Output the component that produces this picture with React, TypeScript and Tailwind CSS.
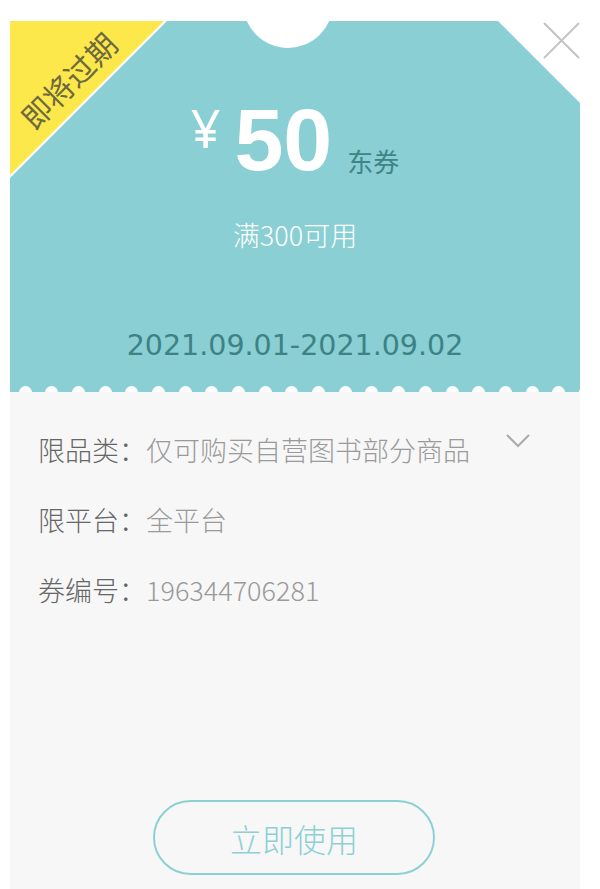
const cjk = "font-['Noto_Sans_CJK_SC','Noto_Sans',sans-serif]";

const rows = [
    { label: "限品类：", value: "仅可购买自营图书部分商品", more: true },
    { label: "限平台：", value: "全平台" },
    { label: "券编号：", value: "196344706281" },
];

const App = () => {
    return (
        <div className="min-h-[889px] bg-white pt-[21px] pl-[10px]">
            <div className="relative w-[570px]">
                {/* top part */}
                <div className="relative h-[371px] bg-[#89cfd3] [clip-path:polygon(0_0,488px_0,570px_82px,570px_100%,0_100%)]">
                    <div className="absolute left-[233px] top-[-63px] w-[90px] h-[90px] rounded-full bg-white" />
                    <div className="absolute left-0 top-0 w-[157px] h-[157px] bg-white [clip-path:polygon(0_0,100%_0,0_100%)]" />
                    <div className="absolute left-0 top-0 w-[154px] h-[154px] bg-[#fde84c] [clip-path:polygon(0_0,100%_0,0_100%)]" />
                    <div
                        className={`absolute left-[-14px] top-[44px] w-[144px] text-center text-[30px] leading-[30px] text-[#6d6a3f] -rotate-45 ${cjk}`}
                    >
                        即将过期
                    </div>

                    <div className="flex flex-col items-center pt-[75px]">
                        <div className="flex h-[88px] items-start">
                            <span className="mt-[6px] mr-[14px] text-[52px] leading-none text-white font-['Noto_Sans',sans-serif]">
                                ¥
                            </span>
                            <span className="text-[88px] leading-none font-bold text-white font-['Liberation_Sans',sans-serif]">
                                50
                            </span>
                            <span className={`self-end mb-[10px] ml-[15px] text-[26px] leading-none text-[#3f8487] ${cjk}`}>
                                东券
                            </span>
                        </div>
                        <div className={`mt-[37px] text-[27px] leading-none font-light text-white ${cjk}`}>
                            满300可用
                        </div>
                        <div className="mt-[84px] text-[28.5px] leading-none text-[#3e8285] font-['DejaVu_Sans',sans-serif]">
                            2021.09.01-2021.09.02
                        </div>
                    </div>

                    <div className="absolute bottom-0 left-0 right-0 h-[6px] overflow-hidden">
                        <div className="flex gap-[13.7px] pl-[8.5px]">
                            {Array.from({ length: 22 }).map((_, i) => (
                                <div key={i} className="w-[13px] h-[13px] shrink-0 rounded-full bg-white" />
                            ))}
                        </div>
                    </div>
                </div>

                {/* close */}
                <svg className="absolute left-[533px] top-[1px]" width="37" height="37" viewBox="0 0 37 37">
                    <path d="M1 1 L36 36 M36 1 L1 36" stroke="#c4c4c4" strokeWidth="2" fill="none" />
                </svg>

                {/* bottom part */}
                <div className={`h-[497px] bg-[#f7f7f7] pl-[28px] pt-[44px] font-light ${cjk}`}>
                    <div className="flex flex-col gap-[43px]">
                        {rows.map((row) => (
                            <div key={row.label} className="flex items-start text-[27px] leading-none">
                                <span className="text-[#666]">{row.label}</span>
                                <span className="text-[#9a9a9a]">{row.value}</span>
                                {row.more && (
                                    <svg className="ml-[36px] mt-[-2px]" width="24" height="14" viewBox="0 0 24 14">
                                        <polyline points="1,1 12,12 23,1" stroke="#aaa" strokeWidth="2" fill="none" />
                                    </svg>
                                )}
                            </div>
                        ))}
                    </div>
                    <div className="mt-[197px] ml-[115px] flex h-[75px] w-[282px] items-center justify-center rounded-full border-2 border-[#8dd0d4] text-[32px] leading-none text-[#8dd0d4]">
                        立即使用
                    </div>
                </div>
            </div>
        </div>
    );
};

export default App;
